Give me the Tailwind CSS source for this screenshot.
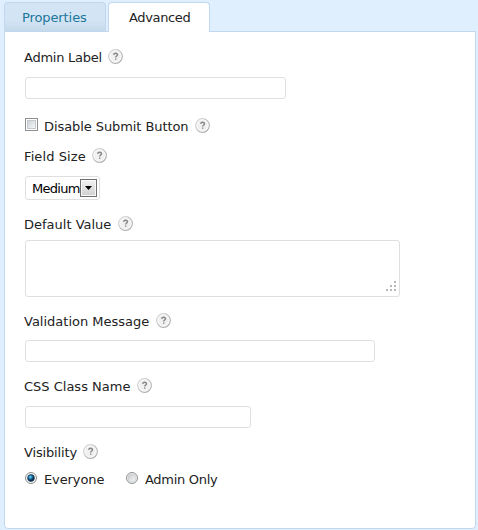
<!DOCTYPE html>
<html lang="en">
<head>
<meta charset="utf-8">
<title>Field settings</title>
<script src="https://cdn.jsdelivr.net/npm/@tailwindcss/browser@4"></script>
</head>
<body class="h-[530px] w-[478px] overflow-hidden bg-[#dfeffe] pt-0.5 pl-1 text-[13px] leading-5 text-[#222] [font-family:Verdana,'DejaVu_Sans',sans-serif]">
<svg class="absolute size-0">
  <defs>
    <linearGradient id="ring" x1="0" y1="0" x2="1" y2="1"><stop offset="0" stop-color="#dedede"/><stop offset="1" stop-color="#a2a2a2"/></linearGradient>
    <radialGradient id="blue" cx=".4" cy=".35"><stop offset="0" stop-color="#7fe0fa"/><stop offset=".45" stop-color="#2489bd"/><stop offset="1" stop-color="#0b2b4a"/></radialGradient>
    <linearGradient id="grey" x1="0" y1="0" x2="1" y2="1"><stop offset="0" stop-color="#c4c7cb"/><stop offset="1" stop-color="#fafafa"/></linearGradient>
    <symbol id="help" viewBox="0 0 15 15">
      <circle cx="7.5" cy="7.5" r="6.8" fill="#f0f0f0" stroke="url(#ring)" stroke-width="1.2"/>
      <circle cx="7.5" cy="7.5" r="5.7" fill="none" stroke="#fff" stroke-width=".7"/>
      <path d="M5.7 5.9C5.8 4.7 6.6 4.3 7.6 4.3c1.1 0 1.9.5 1.9 1.5 0 1.2-1.8 1.2-1.8 2.6M7.7 9.5v1.3" fill="none" stroke="#858585" stroke-width="1.4"/>
    </symbol>
  </defs>
</svg>
<nav class="relative z-10 flex h-[30px] gap-0.5">
  <div class="h-[29px] w-[102px] rounded-t border border-b-0 border-[#c1d7f0] bg-linear-to-b from-[#d3e5f5] from-60% to-[#c6d9ea] pt-[5px] pl-[17px] text-[#21759b]"><span class="tracking-[-0.1px]">Properties</span></div>
  <div class="h-[30px] w-[102px] rounded-t border border-b-0 border-[#c1d7f0] bg-white pt-[5px] pl-5"><span class="tracking-[-0.35px]">Advanced</span></div>
</nav>
<main class="-mt-px flex h-[498px] w-[472px] flex-col items-start rounded-b border border-[#c1d7f0] bg-white pt-3.5 pl-5">
  <div class="-ml-px flex h-5 items-center gap-[5px]"><span class="w-[79px] whitespace-nowrap pt-[3px] tracking-[-0.25px]">Admin Label</span><svg class="size-[15px]"><use href="#help"/></svg></div>
  <div class="mt-[11px] h-[22px] w-[261px] rounded-[3px] border border-[#dfdfdf]"></div>
  <div class="mt-4 flex h-5 items-center"><span class="mr-1.5 mb-0.5 size-[13px] border border-[#8e8f8f] bg-white p-px"><span class="block size-full border border-[#c4c9cf] bg-linear-to-br from-[#ccd0d5] to-[#f8f8f8]"></span></span><span class="w-[151px] whitespace-nowrap pt-[3px] tracking-[-0.08px]">Disable Submit Button</span><svg class="size-[15px]"><use href="#help"/></svg></div>
  <div class="mt-2.5 -ml-px flex h-5 items-center gap-[5px]"><span class="w-[63px] whitespace-nowrap pt-[3px] tracking-[0.1px]">Field Size</span><svg class="size-[15px]"><use href="#help"/></svg></div>
  <div class="mt-[11px] flex h-6 w-[75px] items-center rounded-[3px] border border-[#dfdfdf] pl-1.5 text-black"><span class="w-[48px] whitespace-nowrap pt-0.5 tracking-[-0.7px]">Medium</span><span class="flex h-[18px] w-[17px] items-center justify-center border border-[#707070] bg-linear-to-b from-[#f2f2f2] to-[#d0d0d0] shadow-[inset_0_0_0_1px_#f8f8f8]"><svg class="h-1 w-[7px]" viewBox="0 0 7 4"><path d="M0 0h7L3.5 4z"/></svg></span></div>
  <div class="mt-[13px] -ml-px flex h-5 items-center gap-[5px]"><span class="w-[89px] whitespace-nowrap pt-[3px]">Default Value</span><svg class="size-[15px]"><use href="#help"/></svg></div>
  <div class="mt-[7px] flex h-[57px] w-[375px] items-end justify-end rounded-[3px] border border-[#dfdfdf] pr-[3px] pb-[5px]"><svg class="h-2.5 w-2.5" viewBox="0 0 10 10" fill="#b8b8b8" shape-rendering="crispEdges"><path d="M8 0h2v2H8zM4 4h2v2H4zM8 4h2v2H8zM0 8h2v2H0zM4 8h2v2H4zM8 8h2v2H8z"/></svg></div>
  <div class="mt-[13px] -ml-px flex h-5 items-center gap-[5px]"><span class="w-[127px] whitespace-nowrap pt-[3px]">Validation Message</span><svg class="size-[15px]"><use href="#help"/></svg></div>
  <div class="mt-2.5 h-[22px] w-[350px] rounded-[3px] border border-[#dfdfdf]"></div>
  <div class="mt-[13px] -ml-px flex h-5 items-center gap-[5px]"><span class="w-[108px] whitespace-nowrap pt-[3px]">CSS Class Name</span><svg class="size-[15px]"><use href="#help"/></svg></div>
  <div class="mt-[11px] h-[22px] w-[226px] rounded-[3px] border border-[#dfdfdf]"></div>
  <div class="mt-[13px] -ml-px flex h-5 items-center gap-[5px]"><span class="w-[54px] whitespace-nowrap pt-[3px] tracking-[-0.15px]">Visibility</span><svg class="size-[15px]"><use href="#help"/></svg></div>
  <div class="mt-[7px] flex h-5 items-center">
    <svg class="mr-[7px] size-3" viewBox="0 0 12 12"><circle cx="6" cy="6" r="5.5" fill="#f4f4f4" stroke="#8e8f8f"/><circle cx="6" cy="6" r="3.4" fill="url(#blue)" stroke="#173754" stroke-width=".7"/></svg>
    <span class="w-[82px] whitespace-nowrap pt-[3px] tracking-[-0.1px]">Everyone</span>
    <svg class="mr-[7px] size-3" viewBox="0 0 12 12"><circle cx="6" cy="6" r="5.5" fill="#f4f4f4" stroke="#8e8f8f"/><circle cx="6" cy="6" r="4" fill="url(#grey)" stroke="#c5c9ce" stroke-width=".6"/></svg>
    <span class="whitespace-nowrap pt-[3px] tracking-[-0.3px]">Admin Only</span>
  </div>
</main>
</body>
</html>
